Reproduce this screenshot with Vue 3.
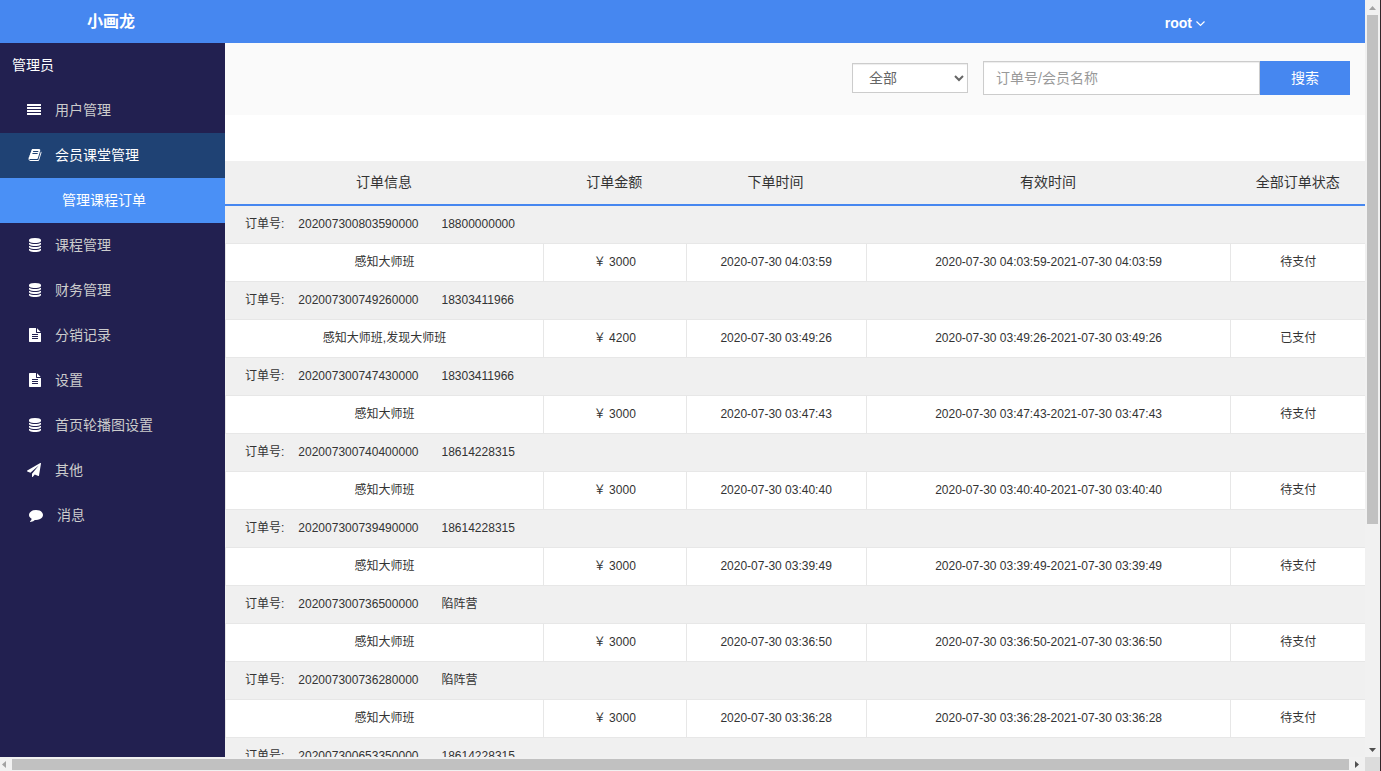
<script setup>
import { ref } from 'vue'

const filter = ref('all')
const keyword = ref('')

const icons = {
  list: 'M32 128h1728l32 32v192l-32 32h-1728l-32-32v-192zM32 512h1728l32 32v192l-32 32h-1728l-32-32v-192zM32 896h1728l32 32v192l-32 32h-1728l-32-32v-192zM32 1280h1728l32 32v192l-32 32h-1728l-32-32v-192z',
  book: 'M1703 478q40 57 18 129l-275 906q-19 64-76.5 107.5t-122.5 43.5h-923q-77 0-148.5-53.5t-99.5-131.5q-24-67-2-127 0-4 3-27t4-37q1-8-3-21.5t-3-19.5q2-11 8-21t16.5-23.5 16.5-23.5q23-38 45-91.5t30-91.5q3-10 .5-30t-.5-28q3-11 17-28t17-23q21-36 42-92t25-90q1-9-2.5-32t.5-28q4-13 22-30.5t22-22.5q19-26 42.5-84.5t27.5-96.5q1-8-3-25.5t-2-26.5q2-8 9-18t18-23 17-21q8-12 16.5-30.5t15-35 16-36 19.5-32 26.5-23.5 36-11.5 47.5 5.5l-1 3q38-9 51-9h761q74 0 114 56t18 130l-274 906q-36 119-71.5 153.5t-128.5 34.5h-869q-27 0-38 15-11 16-1 43 24 70 144 70h923q29 0 56-15.5t35-41.5l300-987q7-22 5-57 38 15 59 43zm-1064 2q-4 13 2 22.5t20 9.5h608q13 0 25.5-9.5t16.5-22.5l21-64q4-13-2-22.5t-20-9.5h-608q-13 0-25.5 9.5t-16.5 22.5zm-83 256q-4 13 2 22.5t20 9.5h608q13 0 25.5-9.5t16.5-22.5l21-64q4-13-2-22.5t-20-9.5h-608q-13 0-25.5 9.5t-16.5 22.5z',
  database: 'M896 768q237 0 443-43t325-127v170q0 69-103 128t-280 93.5-385 34.5-385-34.5-280-93.5-103-128v-170q119 84 325 127t443 43zm0 768q237 0 443-43t325-127v170q0 69-103 128t-280 93.5-385 34.5-385-34.5-280-93.5-103-128v-170q119 84 325 127t443 43zm0-384q237 0 443-43t325-127v170q0 69-103 128t-280 93.5-385 34.5-385-34.5-280-93.5-103-128v-170q119 84 325 127t443 43zm0-1152q208 0 385 34.5t280 93.5 103 128v128q0 69-103 128t-280 93.5-385 34.5-385-34.5-280-93.5-103-128v-128q0-69 103-128t280-93.5 385-34.5z',
  file: 'M1596 476q14 14 28 36h-472v-472q22 14 36 28zm-476 164h544v1056q0 40-28 68t-68 28h-1344q-40 0-68-28t-28-68v-1600q0-40 28-68t68-28h800v544q0 40 28 68t68 28zm160 736v-64q0-14-9-23t-23-9h-704q-14 0-23 9t-9 23v64q0 14 9 23t23 9h704q14 0 23-9t9-23zm0-256v-64q0-14-9-23t-23-9h-704q-14 0-23 9t-9 23v64q0 14 9 23t23 9h704q14 0 23-9t9-23zm0-256v-64q0-14-9-23t-23-9h-704q-14 0-23 9t-9 23v64q0 14 9 23t23 9h704q14 0 23-9t9-23z',
  plane: 'M1764 11q33 24 27 64l-256 1536q-5 29-32 45-14 8-31 8-11 0-24-5l-453-185-242 295q-18 23-49 23-13 0-22-4-19-7-30.5-23.5t-11.5-36.5v-349l864-1059-1069 925-395-162q-37-14-40-55-2-40 32-59l1664-960q15-9 32-9 20 0 36 11z',
  comment: 'M1792 896q0 174-120 321.5t-326 233-450 85.5q-70 0-145-8-198 175-460 231-49 14-114 22-17 2-30.5-9t-17.5-29v-1q-3-4-.5-12t2-10 4.5-9.5l6-9 7-8.5 8-9q7-8 31-34.5t34.5-38 31-39.5 32.5-51 27-59 26-76q-157-89-247.5-220t-90.5-281q0-130 71-248.5t191-204.5 286-136.5 348-50.5q244 0 450 85.5t326 233 120 321.5z'
}

const menu = [
  { label: '用户管理', icon: 'list' },
  { label: '会员课堂管理', icon: 'book', open: true, children: ['管理课程订单'] },
  { label: '课程管理', icon: 'database' },
  { label: '财务管理', icon: 'database' },
  { label: '分销记录', icon: 'file' },
  { label: '设置', icon: 'file' },
  { label: '首页轮播图设置', icon: 'database' },
  { label: '其他', icon: 'plane' },
  { label: '消息', icon: 'comment' }
]

const orders = [
  { no: '202007300803590000', user: '18800000000', name: '感知大师班', price: 3000, time: '04:03:59', status: '待支付' },
  { no: '202007300749260000', user: '18303411966', name: '感知大师班,发现大师班', price: 4200, time: '03:49:26', status: '已支付' },
  { no: '202007300747430000', user: '18303411966', name: '感知大师班', price: 3000, time: '03:47:43', status: '待支付' },
  { no: '202007300740400000', user: '18614228315', name: '感知大师班', price: 3000, time: '03:40:40', status: '待支付' },
  { no: '202007300739490000', user: '18614228315', name: '感知大师班', price: 3000, time: '03:39:49', status: '待支付' },
  { no: '202007300736500000', user: '陷阵营', name: '感知大师班', price: 3000, time: '03:36:50', status: '待支付' },
  { no: '202007300736280000', user: '陷阵营', name: '感知大师班', price: 3000, time: '03:36:28', status: '待支付' },
  { no: '202007300653350000', user: '18614228315' }
]
</script>

<template>
  <div class="window">
    <div class="page">
      <header class="topbar">
        <div class="brand">小画龙</div>
        <button type="button" class="account">
          root
          <svg viewBox="0 0 9 14" aria-hidden="true"><path d="M0.500 5.500L4.500 9.500L8.500 5.500" /></svg>
        </button>
      </header>

      <div class="body">
        <nav class="sidebar">
          <div class="role">管理员</div>
          <template v-for="item in menu" :key="item.label">
            <a href="#" class="item" :class="{ open: item.open }">
              <svg :class="item.icon" viewBox="0 0 1792 1792" aria-hidden="true"><path :d="icons[item.icon]" /></svg>
              <span>{{ item.label }}</span>
            </a>
            <a v-for="child in item.children" :key="child" href="#" class="subitem">{{ child }}</a>
          </template>
        </nav>

        <main class="content">
          <form class="toolbar" @submit.prevent>
            <select v-model="filter" aria-label="订单状态">
              <option value="all">全部</option>
              <option value="paid">已支付</option>
              <option value="unpaid">待支付</option>
            </select>
            <div class="search">
              <input v-model="keyword" type="text" placeholder="订单号/会员名称" aria-label="订单号/会员名称" />
              <button type="submit">搜索</button>
            </div>
          </form>

          <table>
            <colgroup>
              <col class="c-info" /><col class="c-price" /><col class="c-time" /><col class="c-valid" /><col class="c-status" />
            </colgroup>
            <thead>
              <tr>
                <th>订单信息</th>
                <th>订单金额</th>
                <th>下单时间</th>
                <th>有效时间</th>
                <th>全部订单状态</th>
              </tr>
            </thead>
            <tbody v-for="o in orders" :key="o.no">
              <tr class="group">
                <td colspan="5">
                  <div class="meta"><span>订单号:</span><span class="no">{{ o.no }}</span><span>{{ o.user }}</span></div>
                </td>
              </tr>
              <tr v-if="o.name" class="detail">
                <td>{{ o.name }}</td>
                <td>￥ {{ o.price }}</td>
                <td>2020-07-30 {{ o.time }}</td>
                <td>2020-07-30 {{ o.time }}-2021-07-30 {{ o.time }}</td>
                <td>{{ o.status }}</td>
              </tr>
            </tbody>
          </table>
        </main>
      </div>
    </div>

    <div class="vbar" aria-hidden="true">
      <div class="cap"><svg width="7" height="4"><path d="M0 4L3.500 0L7 4z" fill="#a3a3a3" /></svg></div>
      <div class="track"><div class="thumb"></div></div>
      <div class="cap"><svg width="7" height="4"><path d="M0 0L3.500 4L7 0z" fill="#505050" /></svg></div>
    </div>
    <div class="hbar" aria-hidden="true">
      <div class="cap start"><svg width="4" height="7"><path d="M4 0L0 3.500L4 7z" fill="#a3a3a3" /></svg></div>
      <div class="thumb"></div>
      <div class="cap end"><svg width="4" height="7"><path d="M0 0L4 3.500L0 7z" fill="#505050" /></svg></div>
    </div>
    <div class="corner"></div>
  </div>
</template>

<style>
body {
  margin: 0;
  overflow: hidden;
}
</style>

<style scoped>
* {
  box-sizing: border-box;
}
.window {
  display: grid;
  grid-template-columns: minmax(0, 1fr) 15px;
  grid-template-rows: minmax(0, 1fr) 14px;
  height: 100vh;
  border-right: 1px solid #33262a;
  font-family: "Liberation Sans", "Noto Sans CJK SC", sans-serif;
  font-size: 14px;
  line-height: 20px;
  color: #333;
}
button,
input,
select {
  font: inherit;
}
a {
  text-decoration: none;
}
.page {
  display: flex;
  flex-direction: column;
  overflow: hidden;
  background: #fff;
}
.topbar {
  display: flex;
  flex: none;
  align-items: center;
  justify-content: space-between;
  height: 43px;
  padding-right: 160px;
  background: #4687f0;
  color: #fff;
}
.brand {
  width: 222px;
  text-align: center;
  font-size: 16px;
  font-weight: bold;
}
.account {
  display: flex;
  align-items: center;
  gap: 4px;
  padding: 3px 0 0;
  border: 0;
  background: none;
  color: #fff;
  font-weight: bold;
}
.account svg {
  width: 9px;
  height: 14px;
  fill: none;
  stroke: #fff;
  stroke-width: 1.2;
}
.body {
  display: flex;
  flex: 1;
  min-height: 0;
}
.sidebar {
  flex: none;
  width: 225px;
  background: #222050;
}
.role,
.item,
.subitem {
  display: flex;
  align-items: center;
  height: 45px;
  color: #ccc;
}
.role {
  padding: 0 0 2px 12px;
  color: #fff;
}
.item {
  padding-left: 28px;
}
.item span {
  padding-bottom: 2px;
}
.item svg {
  width: 14px;
  height: 14px;
  margin: 0 13px 1px 0;
  fill: #fff;
}
.item svg.list,
.item svg.plane {
  margin-right: 14px;
  margin-left: -1px;
}
.item svg.comment {
  margin-right: 14px;
  margin-left: 1px;
}
.item.open {
  background: #1f4274;
  color: #fff;
}
.subitem {
  padding: 0 0 2px 62px;
  background: #4a90f6;
  color: #fff;
}
.content {
  flex: 1;
  min-width: 0;
  overflow: hidden;
}
.toolbar {
  display: flex;
  align-items: center;
  justify-content: flex-end;
  gap: 15px;
  height: 72px;
  margin-bottom: 46px;
  padding: 0 15px 2px 0;
  background: #fafafa;
}
select {
  width: 116px;
  height: 30px;
  padding: 0 0 0 12px;
  border: 1px solid #ccc;
  border-radius: 0;
  background-color: #fff;
  box-shadow: inset 0 1px 1px rgba(0, 0, 0, 0.075);
  color: #666;
}
.search {
  display: flex;
  width: 367px;
  height: 34px;
}
input {
  flex: 1;
  min-width: 0;
  padding: 0 12px;
  border: 1px solid #ccc;
  border-radius: 0;
  background: #fff;
  box-shadow: inset 0 1px 1px rgba(0, 0, 0, 0.075);
  color: #555;
}
input::placeholder {
  color: #999;
}
.search button {
  width: 90px;
  padding: 0;
  border: 0;
  background: #4687f0;
  color: #fff;
}
table {
  width: 100%;
  table-layout: fixed;
  border-collapse: separate;
  border-spacing: 0;
  text-align: center;
}
.c-info {
  width: 27.9%;
}
.c-price {
  width: 12.5%;
}
.c-time {
  width: 15.8%;
}
.c-valid {
  width: 32%;
}
.c-status {
  width: 11.8%;
}
th {
  height: 45px;
  padding: 0 0 2px;
  border-bottom: 2px solid #4687f0;
  background: #f0f0f0;
  font-weight: normal;
}
td {
  height: 38px;
  padding: 0 0 2px;
  border-bottom: 1px solid #e7e7e7;
  font-size: 12px;
}
.group td {
  background: #f0f0f0;
}
.detail td {
  border-left: 1px solid #e7e7e7;
  background: #fff;
}
.meta {
  display: flex;
  padding-left: 20px;
}
.no {
  margin: 0 23px 0 14px;
}
.vbar,
.hbar {
  display: flex;
  background: #f1f1f1;
}
.vbar {
  flex-direction: column;
}
.cap {
  display: flex;
  flex: none;
  align-items: center;
  justify-content: center;
}
.vbar .cap {
  height: 15px;
}
.hbar .cap {
  width: 12px;
  padding-right: 4px;
}
.hbar .end {
  width: 16px;
  padding-right: 0;
}
.track {
  flex: 1;
}
.thumb {
  background: #c1c1c1;
}
.vbar .thumb {
  width: 11px;
  height: 70%;
  margin-left: 2px;
}
.hbar .thumb {
  flex: 1;
  margin: 2px 0 1px;
}
.corner {
  background: #dcdcdc;
}
</style>
